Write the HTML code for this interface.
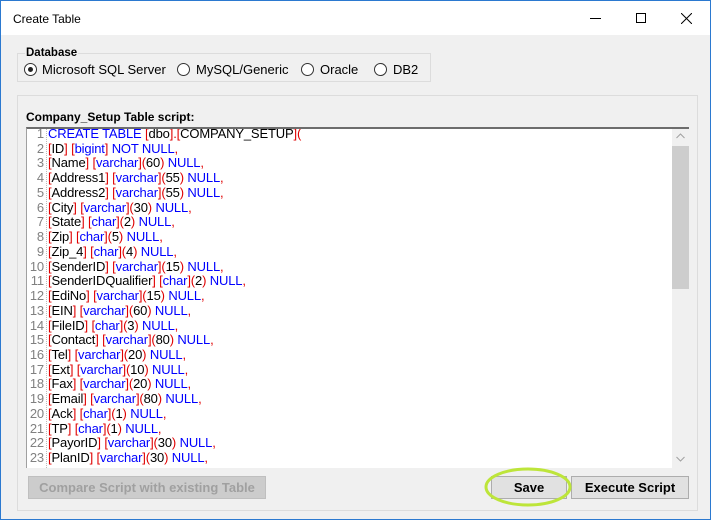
<!DOCTYPE html>
<html><head><style>
*{margin:0;padding:0;box-sizing:border-box}
body{width:714px;height:521px;background:#fff;position:relative;overflow:hidden;font-family:"Liberation Sans",sans-serif;font-size:12px}
.win{position:absolute;left:0;top:0;width:711px;height:520px;border:1px solid #2b79d0;background:#f0f0f0}
.title{position:absolute;left:0;top:0;width:709px;height:34px;background:#fff}
.title span{position:absolute;left:12px;top:11px;font-size:12px;color:#000}
.abs{position:absolute}
.grp{position:absolute;left:16px;top:52px;width:414px;height:29px;border:1px solid #dcdcdc}
.radio{position:absolute;top:62px;width:13px;height:13px;border:1px solid #333;border-radius:50%;background:#fff}
.rl{position:absolute;top:61px;font-size:13px;color:#000}
.panel{position:absolute;left:16px;top:94px;width:681px;height:416px;border:1px solid #dcdcdc}
.code{position:absolute;left:25px;top:126px;width:663px;height:341px;background:#fff;border-top:2px solid #6d6d6d;border-left:1px solid #a0a0a0;overflow:hidden}
.gut{position:absolute;left:19px;top:0;width:1px;height:100%;border-right:1px dotted #bbb}
.lines{position:absolute;left:0;top:-2px;font-size:13px;line-height:14.73px;letter-spacing:-0.15px;white-space:pre}
.ln{display:inline-block;width:17px;text-align:right;color:#808080;margin-right:4px}
.r{color:#e00000}.b{color:#0000ff}
.sb{position:absolute;left:645px;top:0;width:17px;height:100%;background:#f0f0f0}
.th{position:absolute;left:645px;top:17px;width:17px;height:143px;background:#cdcdcd}
.btn{position:absolute;top:475px;height:23px;border:1px solid #adadad;background:#e1e1e1;font-weight:bold;font-size:13px;text-align:center;line-height:21px}
</style></head><body>
<div class="win">
<div class="title"><span>Create Table</span>
<div class="abs" style="left:589px;top:17px;width:11px;height:1px;background:#000"></div>
<div class="abs" style="left:635px;top:12px;width:10px;height:10px;border:1px solid #000"></div>
<svg class="abs" style="left:680px;top:12px" width="11" height="11"><path d="M0 0L11 11M11 0L0 11" stroke="#000" stroke-width="1"/></svg>
</div>
<div class="grp"></div>
<div class="abs" style="left:24px;top:46px;background:#f0f0f0;padding:0 1px;font-weight:bold;font-size:11.5px">Database</div>
<div class="radio" style="left:23px"><div class="abs" style="left:3px;top:3px;width:5px;height:5px;border-radius:50%;background:#222"></div></div>
<div class="rl" style="left:41px">Microsoft SQL Server</div>
<div class="radio" style="left:176px"></div><div class="rl" style="left:195px">MySQL/Generic</div>
<div class="radio" style="left:300px"></div><div class="rl" style="left:319px">Oracle</div>
<div class="radio" style="left:373px"></div><div class="rl" style="left:392px">DB2</div>
<div class="panel"></div>
<div class="abs" style="left:25px;top:109px;font-weight:bold;font-size:12px">Company_Setup Table script:</div>
<div class="code"><div class="gut"></div>
<div class="lines"><span class="ln">1</span><span class="b">CREATE TABLE </span><span class="r">[</span>dbo<span class="r">].[</span>COMPANY_SETUP<span class="r">](</span>
<span class="ln">2</span><span class="r">[</span>ID<span class="r">] [</span><span class="b">bigint</span><span class="r">]</span> <span class="b">NOT NULL</span><span class="r">,</span>
<span class="ln">3</span><span class="r">[</span>Name<span class="r">] [</span><span class="b">varchar</span><span class="r">](</span>60<span class="r">)</span> <span class="b">NULL</span><span class="r">,</span>
<span class="ln">4</span><span class="r">[</span>Address1<span class="r">] [</span><span class="b">varchar</span><span class="r">](</span>55<span class="r">)</span> <span class="b">NULL</span><span class="r">,</span>
<span class="ln">5</span><span class="r">[</span>Address2<span class="r">] [</span><span class="b">varchar</span><span class="r">](</span>55<span class="r">)</span> <span class="b">NULL</span><span class="r">,</span>
<span class="ln">6</span><span class="r">[</span>City<span class="r">] [</span><span class="b">varchar</span><span class="r">](</span>30<span class="r">)</span> <span class="b">NULL</span><span class="r">,</span>
<span class="ln">7</span><span class="r">[</span>State<span class="r">] [</span><span class="b">char</span><span class="r">](</span>2<span class="r">)</span> <span class="b">NULL</span><span class="r">,</span>
<span class="ln">8</span><span class="r">[</span>Zip<span class="r">] [</span><span class="b">char</span><span class="r">](</span>5<span class="r">)</span> <span class="b">NULL</span><span class="r">,</span>
<span class="ln">9</span><span class="r">[</span>Zip_4<span class="r">] [</span><span class="b">char</span><span class="r">](</span>4<span class="r">)</span> <span class="b">NULL</span><span class="r">,</span>
<span class="ln">10</span><span class="r">[</span>SenderID<span class="r">] [</span><span class="b">varchar</span><span class="r">](</span>15<span class="r">)</span> <span class="b">NULL</span><span class="r">,</span>
<span class="ln">11</span><span class="r">[</span>SenderIDQualifier<span class="r">] [</span><span class="b">char</span><span class="r">](</span>2<span class="r">)</span> <span class="b">NULL</span><span class="r">,</span>
<span class="ln">12</span><span class="r">[</span>EdiNo<span class="r">] [</span><span class="b">varchar</span><span class="r">](</span>15<span class="r">)</span> <span class="b">NULL</span><span class="r">,</span>
<span class="ln">13</span><span class="r">[</span>EIN<span class="r">] [</span><span class="b">varchar</span><span class="r">](</span>60<span class="r">)</span> <span class="b">NULL</span><span class="r">,</span>
<span class="ln">14</span><span class="r">[</span>FileID<span class="r">] [</span><span class="b">char</span><span class="r">](</span>3<span class="r">)</span> <span class="b">NULL</span><span class="r">,</span>
<span class="ln">15</span><span class="r">[</span>Contact<span class="r">] [</span><span class="b">varchar</span><span class="r">](</span>80<span class="r">)</span> <span class="b">NULL</span><span class="r">,</span>
<span class="ln">16</span><span class="r">[</span>Tel<span class="r">] [</span><span class="b">varchar</span><span class="r">](</span>20<span class="r">)</span> <span class="b">NULL</span><span class="r">,</span>
<span class="ln">17</span><span class="r">[</span>Ext<span class="r">] [</span><span class="b">varchar</span><span class="r">](</span>10<span class="r">)</span> <span class="b">NULL</span><span class="r">,</span>
<span class="ln">18</span><span class="r">[</span>Fax<span class="r">] [</span><span class="b">varchar</span><span class="r">](</span>20<span class="r">)</span> <span class="b">NULL</span><span class="r">,</span>
<span class="ln">19</span><span class="r">[</span>Email<span class="r">] [</span><span class="b">varchar</span><span class="r">](</span>80<span class="r">)</span> <span class="b">NULL</span><span class="r">,</span>
<span class="ln">20</span><span class="r">[</span>Ack<span class="r">] [</span><span class="b">char</span><span class="r">](</span>1<span class="r">)</span> <span class="b">NULL</span><span class="r">,</span>
<span class="ln">21</span><span class="r">[</span>TP<span class="r">] [</span><span class="b">char</span><span class="r">](</span>1<span class="r">)</span> <span class="b">NULL</span><span class="r">,</span>
<span class="ln">22</span><span class="r">[</span>PayorID<span class="r">] [</span><span class="b">varchar</span><span class="r">](</span>30<span class="r">)</span> <span class="b">NULL</span><span class="r">,</span>
<span class="ln">23</span><span class="r">[</span>PlanID<span class="r">] [</span><span class="b">varchar</span><span class="r">](</span>30<span class="r">)</span> <span class="b">NULL</span><span class="r">,</span></div>
<div class="sb"></div><div class="th"></div>
<svg class="abs" style="left:649px;top:4px" width="9" height="6"><path d="M0.5 5L4.5 1L8.5 5" stroke="#a0a0a0" fill="none"/></svg>
<svg class="abs" style="left:649px;top:327px" width="9" height="6"><path d="M0.5 1L4.5 5L8.5 1" stroke="#a0a0a0" fill="none"/></svg>
</div>
<div class="btn" style="left:27px;width:238px;color:#a0a0a0;background:#cccccc;border-color:#bfbfbf">Compare Script with existing Table</div>
<div class="btn" style="left:490px;width:76px">Save</div>
<div class="btn" style="left:570px;width:118px">Execute Script</div>
<svg class="abs" style="left:482px;top:465px" width="90" height="42"><ellipse cx="45" cy="21" rx="42" ry="18" fill="none" stroke="#bde53a" stroke-width="3"/></svg>
</div>
</body></html>
